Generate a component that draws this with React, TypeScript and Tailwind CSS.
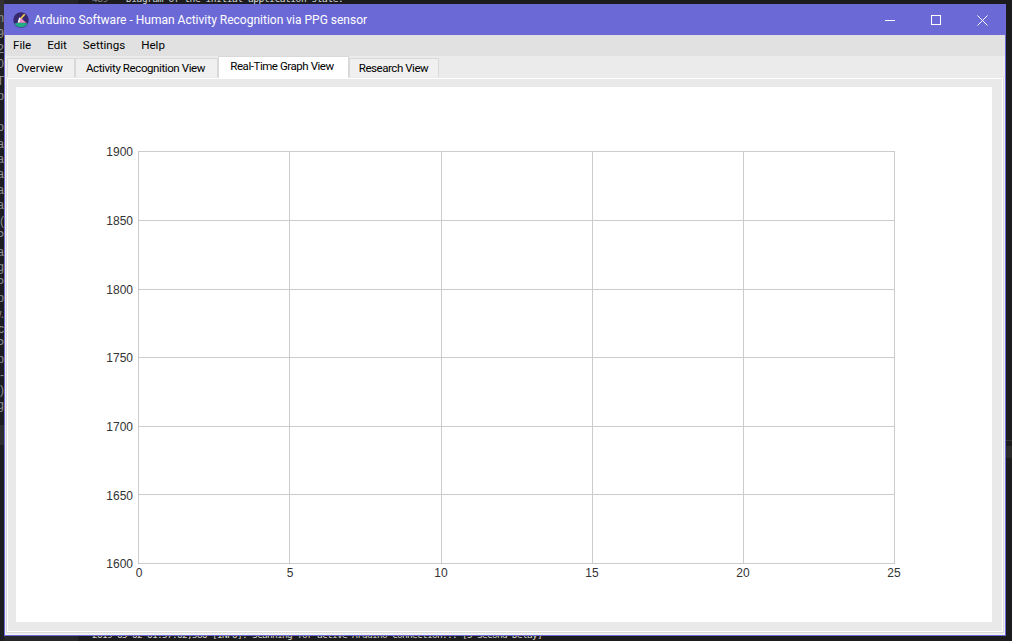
const menus = ["File", "Edit", "Settings", "Help"]
const tabs = [
  { label: "Overview", style: "w-[68px] pr-[3px] tracking-normal" },
  { label: "Activity Recognition View", style: "w-[143px] pr-[2px] tracking-[-0.4px]" },
  { label: "Real-Time Graph View", style: "w-[131px] pr-[3px] tracking-[-0.45px]", active: true },
  { label: "Research View", style: "w-[90px] pr-[1px] tracking-[-0.45px]" },
]
const sideLines = [
  { t: "m", y: "top-[11px]" },
  { t: "19", y: "top-[27px]" },
  { t: "2", y: "top-[42px]" },
  { t: "0", y: "top-[57px]" },
  { t: "T", y: "top-[74px]" },
  { t: "p", y: "top-[89px]" },
  { t: "io", y: "top-[120px]" },
  { t: "ua", y: "top-[137px]" },
  { t: "ua", y: "top-[152px]" },
  { t: "ua", y: "top-[167px]" },
  { t: "ua", y: "top-[183px]" },
  { t: "ua", y: "top-[198px]" },
  { t: "-(", y: "top-[214px]" },
  { t: "P", y: "top-[229px]" },
  { t: "ra", y: "top-[245px]" },
  { t: "ng", y: "top-[260px]" },
  { t: "P", y: "top-[276px]" },
  { t: "p", y: "top-[291px]" },
  { t: "w.", y: "top-[307px]" },
  { t: "c", y: "top-[322px]" },
  { t: "P", y: "top-[337px]" },
  { t: "p", y: "top-[352px]" },
  { t: "y-", y: "top-[368px]" },
  { t: ")", y: "top-[383px]" },
  { t: "ng", y: "top-[398px]" },
]
const xTicks = [
  { label: "0", x: 139, line: 138.5 },
  { label: "5", x: 290, line: 289.5 },
  { label: "10", x: 441, line: 441.5 },
  { label: "15", x: 592, line: 592.5 },
  { label: "20", x: 743, line: 743.5 },
  { label: "25", x: 894, line: 894.5 },
]
const yTicks = [
  { label: "1900", y: 151, line: 151.5 },
  { label: "1850", y: 220, line: 220.5 },
  { label: "1800", y: 289, line: 289.5 },
  { label: "1750", y: 357.5, line: 357.5 },
  { label: "1700", y: 426, line: 426.5 },
  { label: "1650", y: 495, line: 494.5 },
  { label: "1600", y: 563.5, line: 563.5 },
]

function AppIcon() {
  return (
    <svg width="16" height="16" viewBox="0 0 16 16" className="shrink-0">
      <circle cx="8" cy="8" r="7.7" fill="#38286f" />
      <path d="M1.4 11.6 C4.5 10.6 11.5 10.6 14.6 11.6 A7.7 7.7 0 0 1 1.4 11.6Z" fill="#1fae86" />
      <path d="M5 10.8 L6.8 6.6 L9 5.2 L9.4 7.4 L13.4 10.8 Z" fill="#f08fc0" />
      <path d="M7.2 6 L11 1.8 L12.4 2.8 L8.8 6.6 Z" fill="#f6cf4a" />
      <path d="M4.6 10.4 L6.2 5.4 L7.6 6 L6.2 10.4 Z" fill="#ffffff" />
    </svg>
  )
}

function WindowButtons() {
  return (
    <div className="flex h-full">
      <div className="flex h-full w-[46px] items-center justify-center">
        <svg width="10" height="10" viewBox="0 0 10 10"><path d="M0 5.5H10" stroke="#fff" strokeWidth="1" /></svg>
      </div>
      <div className="flex h-full w-[46px] items-center justify-center">
        <svg width="10" height="10" viewBox="0 0 10 10"><rect x="0.5" y="0.5" width="9" height="9" fill="none" stroke="#fff" strokeWidth="1" /></svg>
      </div>
      <div className="flex h-full w-[46px] items-center justify-center">
        <svg width="11" height="11" viewBox="0 0 11 11"><path d="M0.5 0.5L10.5 10.5M10.5 0.5L0.5 10.5" stroke="#fff" strokeWidth="1" /></svg>
      </div>
    </div>
  )
}

function GraphPlot() {
  return (
    <svg width="976" height="535" viewBox="16 87 976 535" className="block">
      {xTicks.map((tick) => (
        <line key={tick.label} x1={tick.line} x2={tick.line} y1={151} y2={564} stroke="#cccccc" />
      ))}
      {yTicks.map((tick) => (
        <line key={tick.label} x1={138} x2={895} y1={tick.line} y2={tick.line} stroke="#cccccc" />
      ))}
      {yTicks.map((tick) => (
        <text key={tick.label} x={133} y={tick.y + 4.5} textAnchor="end" fontSize="12" fill="#333" fontFamily="'Liberation Sans', sans-serif">{tick.label}</text>
      ))}
      {xTicks.map((tick) => (
        <text key={tick.label} x={tick.x} y={577} textAnchor="middle" fontSize="12" fill="#333" fontFamily="'Liberation Sans', sans-serif">{tick.label}</text>
      ))}
    </svg>
  )
}

export default function App() {
  return (
    <div className="relative h-[641px] w-[1012px] overflow-hidden bg-[#1c1c1e] pl-[4px] pt-[4px] font-['Roboto',sans-serif]">
      {/* editor windows behind the app */}
      <div className="absolute left-0 top-0 h-full w-[78px] bg-[#26262a]" />
      <div className="absolute left-0 top-[35px] h-[606px] w-[4px] bg-[#1c1d22]" />
      <div className="absolute left-0 top-0 h-[35px] w-[4px] bg-[#333335]" />
      <div className="absolute left-0 top-[425px] h-[20px] w-[4px] bg-[#2d2d2f]" />
      <div className="absolute right-0 top-[440px] h-[1px] w-[6px] bg-[#333333]" />
      <div className="absolute right-0 top-[446px] h-[12px] w-[6px] bg-[#2b2b2b]" />
      <div className="absolute inset-x-0 top-0 h-[4px] overflow-hidden">
        <div className="absolute left-[92px] top-[-8px] whitespace-pre font-['DejaVu_Sans_Mono',monospace] text-[9.5px] tracking-[-0.42px] text-[#8a8a8a]">489</div>
        <div className="absolute left-[126px] top-[-8px] whitespace-pre font-['DejaVu_Sans_Mono',monospace] text-[9.5px] tracking-[-0.42px] text-[#d6dcdf]">
          Diagram of the initial application state.
        </div>
      </div>
      <div className="absolute left-0 top-0 h-full w-[4px] overflow-hidden">
        {sideLines.map((line) => (
          <div key={line.y} className={`absolute right-0 whitespace-pre font-['Liberation_Sans',sans-serif] text-[12px] leading-[14px] text-[#8f8f8f] ${line.y}`}>
            {line.t}
          </div>
        ))}
      </div>
      <div className="absolute inset-x-0 bottom-0 h-[5px] overflow-hidden">
        <div className="absolute left-[92px] top-[-8px] whitespace-pre font-['DejaVu_Sans_Mono',monospace] text-[9.5px] tracking-[-0.72px] text-[#d6d6c4]">
          2019-05-02 01:57:02,580 [INFO]: Scanning for active Arduino Connection... [5 Second Delay]
        </div>
      </div>

      <div className="relative flex h-[632px] w-[1002px] flex-col border border-[#6b69d6] bg-[#f0f0f0]">
        <div className="flex h-[30px] shrink-0 items-center justify-between bg-[#6b69d6] pl-[8px] text-white">
          <div className="flex items-center gap-[5px]">
            <AppIcon />
            <span className="text-[12px] leading-none">Arduino Software - Human Activity Recognition via PPG sensor</span>
          </div>
          <WindowButtons />
        </div>

        <div className="flex h-[21px] shrink-0 items-center gap-[16px] bg-[#e1e1e1] pl-[8px] text-[11.6px] text-black">
          {menus.map((menu) => (
            <span key={menu}>{menu}</span>
          ))}
        </div>

        <div className="relative z-10 -mb-[1px] flex h-[22px] shrink-0 items-end bg-[#ebebeb] pl-[2px] text-[11.5px] text-black">
          {tabs.map((tab) =>
            tab.active ? (
              <div key={tab.label} className={`flex h-[22px] items-center justify-center border-x border-t border-[#d9d9d9] bg-white pb-[1px] ${tab.style}`}>
                {tab.label}
              </div>
            ) : (
              <div key={tab.label} className={`mb-[1px] flex h-[19px] items-center justify-center border-x border-t border-[#d9d9d9] bg-[#f0f0f0] pt-[1px] ${tab.style}`}>
                {tab.label}
              </div>
            ),
          )}
        </div>

        <div className="mx-[1px] mb-[2px] flex min-h-0 flex-1 border border-[#d9d9d9] bg-[#e9e9e9] p-[9px] shadow-[inset_0_0_0_1px_#ffffff]">
          <div className="h-[535px] w-[976px] bg-white">
            <GraphPlot />
          </div>
        </div>
      </div>
    </div>
  )
}
